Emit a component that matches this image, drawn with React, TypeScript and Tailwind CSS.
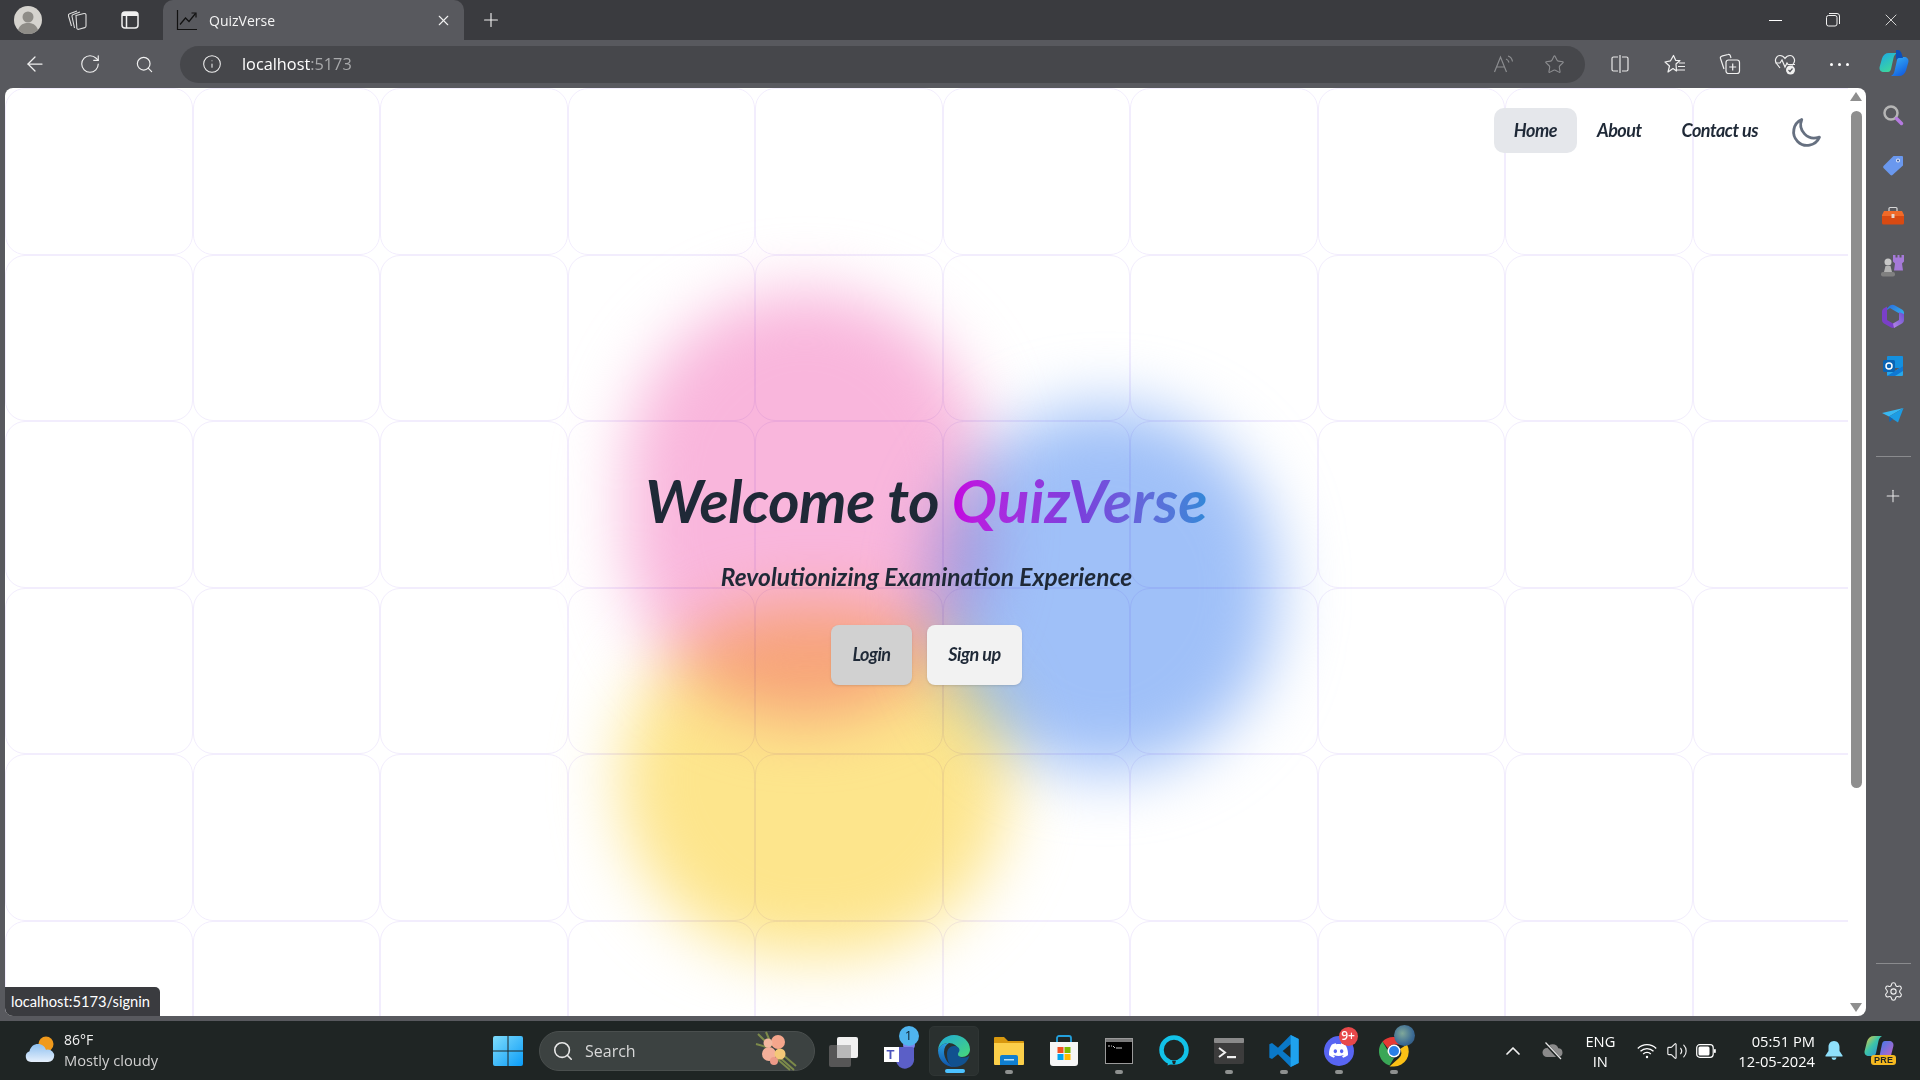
import { ArrowLeft, ChevronUp, Info, Plus, RotateCw, Search, Settings, Star, Volume2, X } from "lucide-react";
import { SiDiscord } from "react-icons/si";

const cells = Array.from({ length: 60 });

function Profile() {
  return (
    <svg width="28" height="28" viewBox="0 0 28 28">
      <circle cx="14" cy="14" r="14" fill="#d5d3ce" />
      <circle cx="14" cy="11" r="5.5" fill="#8e8c87" />
      <path d="M4 24c2-6 6-7 10-7s8 1 10 7a14 14 0 0 1-20 0z" fill="#8e8c87" />
    </svg>
  );
}

function Workspaces() {
  return (
    <svg width="24" height="24" viewBox="0 0 24 24" fill="none" stroke="#dcdcdc" strokeWidth="1.1">
      <path d="M11 7.500 19 5.500c1-.2 2 .4 2 1.500v11c0 .8-.5 1.400-1.200 1.600l-6 1.700c-1 .3-2-.4-2-1.500z" />
      <path d="M9.500 20 7 8.500C6.800 7.500 7.300 6.700 8.200 6.400L15 4" />
      <path d="M6.500 18 3.500 8c-.3-1 .2-1.900 1.100-2.200L12 3" />
    </svg>
  );
}

function TabsIcon() {
  return (
    <svg width="20" height="20" viewBox="0 0 20 20" fill="none">
      <rect x="2" y="2" width="16" height="16" rx="3" stroke="#f0f0f0" strokeWidth="1.500" />
      <path d="M2 5a3 3 0 0 1 3-3h10a3 3 0 0 1 3 3v1H2z" fill="#f0f0f0" />
      <path d="M6.500 6v12" stroke="#f0f0f0" strokeWidth="1.500" />
    </svg>
  );
}

function Favicon() {
  return (
    <svg width="22" height="22" viewBox="0 0 22 22" fill="none" stroke="#111" strokeWidth="1.200">
      <path d="M1.500 1v19.500H21" />
      <path d="M4 15.500 9.500 9l3.500 3.500 6.500-8" />
      <path d="M15.500 4H20v4.500" />
    </svg>
  );
}

function SplitIcon() {
  return (
    <svg width="20" height="20" viewBox="0 0 20 20" fill="none" stroke="#e8e8e8" strokeWidth="1.200">
      <path d="M8 3H3.500A1.500 1.500 0 0 0 2 4.500v11A1.500 1.500 0 0 0 3.500 17H8" />
      <path d="M12 3h4.500A1.500 1.500 0 0 1 18 4.500v11a1.500 1.500 0 0 1-1.500 1.500H12" />
      <path d="M10 1v18" />
    </svg>
  );
}

function FavoritesIcon() {
  return (
    <svg width="22" height="20" viewBox="0 0 22 20" fill="none" stroke="#f0f0f0" strokeWidth="1.200">
      <path d="M9.500 1.500 11.800 6.500 H16L12 10l.5 7-3.500-2.500L4 18l1.500-6L1 8l5.500-1.200z" strokeLinejoin="round" />
      <path d="M15 9h6M14 12.500h7M13 16h8" />
    </svg>
  );
}

function CollectionsIcon() {
  return (
    <svg width="22" height="22" viewBox="0 0 22 22" fill="none" stroke="#f0f0f0" strokeWidth="1.200">
      <path d="M5 16 1.500 5.500c-.3-1 .2-2 1.200-2.300L9 1.500c1-.3 2 .2 2.300 1.200L12 5" />
      <rect x="7" y="7" width="13.500" height="13.500" rx="2.500" />
      <path d="M13.700 10.500v7M10.200 14h7" />
    </svg>
  );
}

function HealthIcon() {
  return (
    <svg width="22" height="22" viewBox="0 0 22 22" fill="none">
      <path d="M6 15 2.500 10.500C0 7 2.500 2.500 6 2.500c2.200 0 3.800 1.200 5 3 1.200-1.800 2.800-3 5-3 3.500 0 6 4.500 3.500 8l-1.500 2" stroke="#f0f0f0" strokeWidth="1.200" />
      <path d="M1.500 10H6l2-3 3 7 2-4 1 1.500h7" stroke="#f0f0f0" strokeWidth="1.200" />
      <circle cx="16.500" cy="17" r="4.500" fill="#f0f0f0" />
      <path d="m14.500 17 1.500 1.500 2.500-3" stroke="#55565b" strokeWidth="1.200" fill="none" />
    </svg>
  );
}

function ReadAloud() {
  return (
    <svg width="22" height="20" viewBox="0 0 22 20" fill="none" stroke="#8c8d90" strokeWidth="1.200">
      <path d="M1.500 18 7.500 3l6 15M3.500 13h8" />
      <path d="M13 5c1.500.5 2.500 1.700 3 3.500M15 2c2.500.7 4 2.700 4.500 5.500" />
    </svg>
  );
}

function CopilotMark({ size }: { size: number }) {
  return (
    <svg width={size} height={size} viewBox="0 0 30 30">
      <defs>
        <linearGradient id="cpa" x1="0" y1="0" x2="0.6" y2="1">
          <stop offset="0" stopColor="#1aa8e8" />
          <stop offset="1" stopColor="#3fd89a" />
        </linearGradient>
        <linearGradient id="cpb" x1="0" y1="0" x2="0.6" y2="1">
          <stop offset="0" stopColor="#38b6f8" />
          <stop offset="1" stopColor="#1460e0" />
        </linearGradient>
      </defs>
      <path d="M10 4h8c-2 1-3 3-3.500 5L12 20c-.4 1.700-1.500 3-3 3H5c-3 0-5-2-4.400-5L3 9.500C4 6 6.500 4 10 4z" fill="url(#cpa)" />
      <path d="M20 27h-8c2-1 3-3 3.500-5L18 11c.4-1.700 1.500-3 3-3h4c3 0 5 2 4.400 5L27 21.500C26 25 23.500 27 20 27z" fill="url(#cpb)" />
      <path d="M17 1h1.500c2.500 0 4 2 4.500 5l1 3h-4c-1.500 0-2.500 1-3 2.500z" fill="#0d4fb8" />
    </svg>
  );
}

function SideSearch() {
  return (
    <svg width="22" height="22" viewBox="0 0 22 22" fill="none">
      <circle cx="9" cy="9" r="6.500" stroke="#b5b5b5" strokeWidth="2.500" />
      <path d="m14.500 14.500 5 5" stroke="#b57ae0" strokeWidth="3.500" strokeLinecap="round" />
    </svg>
  );
}

function SideTag() {
  return (
    <svg width="22" height="22" viewBox="0 0 22 22">
      <path d="M11.500 2H20a1 1 0 0 1 1 1v8.500L10.500 21a1.500 1.500 0 0 1-2 0L1.500 14a1.500 1.500 0 0 1 0-2z" fill="#6a98ee" />
      <circle cx="16" cy="6.500" r="2" fill="#dfe8fb" />
      <circle cx="16" cy="6.500" r="1" fill="#36528f" />
    </svg>
  );
}

function SideToolbox() {
  return (
    <svg width="22" height="20" viewBox="0 0 22 20">
      <path d="M7 6V2.500C7 2 7.500 1.500 8 1.500h6c.5 0 1 .5 1 1V6" stroke="#d8d8d8" strokeWidth="1.200" fill="none" />
      <path d="M2 5h18l2 4v1H0V9z" fill="#f06a28" />
      <path d="M0 10h22v7a1.500 1.500 0 0 1-1.500 1.500h-19A1.500 1.500 0 0 1 0 17z" fill="#d84a12" />
      <rect x="9.500" y="8" width="3" height="4" rx=".6" fill="#e6d6cc" />
    </svg>
  );
}

function SideChess() {
  return (
    <svg width="24" height="24" viewBox="0 0 24 24">
      <path d="M13 1h2.500v2.500h2V1h2v2.500h2V1H24v6.500l-2 2 1 7h-9l1-7-2-2z" fill="#a57ad8" transform="translate(-1 0)" />
      <circle cx="7" cy="8" r="3.500" fill="#c8c8c8" />
      <path d="M4.500 12h5l1.500 6H3z" fill="#b4b4b4" />
      <rect x="0" y="18" width="14" height="4.500" rx="2" fill="#808080" />
    </svg>
  );
}

function SideM365() {
  return (
    <svg width="22" height="24" viewBox="0 0 22 24">
      <defs>
        <linearGradient id="m3a" x1="0" y1="0" x2="1" y2="1">
          <stop offset="0" stopColor="#2b6ce0" />
          <stop offset="1" stopColor="#33b6e8" />
        </linearGradient>
        <linearGradient id="m3b" x1="0" y1="1" x2="1" y2="0">
          <stop offset="0" stopColor="#b487e6" />
          <stop offset="1" stopColor="#6a4ed0" />
        </linearGradient>
      </defs>
      <path d="M8 1.500c1.500-1 3.500-1 5 0l7 4c1.300.8 2 2 2 3.500v3l-9-5-5-3-3 2V4.500z" fill="url(#m3a)" />
      <path d="M0 7.500C0 6 1 4.500 2.500 4L5 2.500V16l6 3.500 3 3-1.500 1c-1 .5-2.500.5-3.500 0l-7-4C.7 18.700 0 17.500 0 16z" fill="#7a3fc8" />
      <path d="M22 10v6c0 1.500-.7 2.700-2 3.500L12 24l-1-4.500 6-3.500V8z" fill="url(#m3b)" />
    </svg>
  );
}

function SideOutlook() {
  return (
    <svg width="20" height="20" viewBox="0 0 20 20">
      <rect x="4" y="0" width="16" height="12" rx="1" fill="#1490df" />
      <path d="M4 10 12 15l8-5v9a1 1 0 0 1-1 1H5a1 1 0 0 1-1-1z" fill="#28a8ea" />
      <path d="M12 15l8-5v5l-8 5H4z" fill="#0f78d4" />
      <rect x="0" y="4" width="12" height="12" rx="1.500" fill="#0a64b4" />
      <circle cx="6" cy="10" r="3" fill="none" stroke="#fff" strokeWidth="1.500" />
    </svg>
  );
}

function SideSend() {
  return (
    <svg width="22" height="16" viewBox="0 0 22 16">
      <path d="M0 5 21.500 0 7 8.500z" fill="#38b8f2" />
      <path d="M21.500 0 7 8.500 16 14.500z" fill="#1c9ce4" />
      <path d="M7 8.500 7.500 14 11 11z" fill="#0d66b8" />
    </svg>
  );
}

function Weather() {
  return (
    <svg width="32" height="30" viewBox="0 0 32 30">
      <defs>
        <linearGradient id="wc" x1="0" y1="0" x2="0" y2="1">
          <stop offset="0" stopColor="#8ec0f0" />
          <stop offset="1" stopColor="#e6f0fc" />
        </linearGradient>
      </defs>
      <circle cx="22" cy="9" r="7.500" fill="#f09a1c" />
      <path d="M7 27a5.500 5.500 0 0 1-1.500-10.700C6.500 11.500 10 9 14 9c4 0 7 2.500 8 6 .7-.3 1.300-.4 2-.4a6.200 6.200 0 0 1 0 12.400z" fill="url(#wc)" />
    </svg>
  );
}

function WindowsLogo() {
  return (
    <svg width="30" height="30" viewBox="0 0 30 30">
      <defs>
        <linearGradient id="wl" x1="0" y1="0" x2="1" y2="1">
          <stop offset="0" stopColor="#7fdcfb" />
          <stop offset="1" stopColor="#0a9cf8" />
        </linearGradient>
      </defs>
      <path d="M0 2a2 2 0 0 1 2-2h12.500v14.500H0zM15.500 0H28a2 2 0 0 1 2 2v12.500H15.500zM0 15.500h14.500V30H2a2 2 0 0 1-2-2zM15.500 15.500H30V28a2 2 0 0 1-2 2H15.500z" fill="url(#wl)" />
    </svg>
  );
}

function Bouquet() {
  return (
    <svg width="44" height="42" viewBox="0 0 44 42">
      <path d="M4 4l12 12M2 14l14 4M12 2l6 14M24 26l16 14M22 28l14 12M28 24l14 12" stroke="#7c8a4a" strokeWidth="2" />
      <circle cx="15" cy="24" r="7" fill="#f4b09a" />
      <circle cx="24" cy="12" r="7" fill="#f5a68c" />
      <circle cx="26" cy="24" r="5.500" fill="#f4c878" />
      <circle cx="14" cy="13" r="4.500" fill="#f2b8a0" />
      <circle cx="20" cy="31" r="4" fill="#ec9a88" />
    </svg>
  );
}

function TaskView() {
  return (
    <svg width="32" height="32" viewBox="0 0 32 32">
      <rect x="9" y="2" width="21" height="21" rx="2" fill="#f0f0f0" />
      <rect x="1" y="10" width="22" height="22" rx="2" fill="#5c5c5c" fillOpacity=".9" />
      <rect x="9" y="10" width="14" height="13" fill="#b8b8b8" />
    </svg>
  );
}

function Teams() {
  return (
    <div className="relative ml-[6px] h-[36px] w-[36px]">
      <svg width="36" height="36" viewBox="0 0 36 36">
        <circle cx="25" cy="12" r="6" fill="#7b83eb" />
        <path d="M10 14h18a2 2 0 0 1 2 2v9a9 9 0 0 1-18 3z" fill="#5b5fc7" />
        <rect x="0" y="14" width="15" height="15" fill="#fff" />
      </svg>
      <span className="absolute left-[3px] top-[14px] text-[13px] leading-[15px] font-bold text-[#4b53bc] font-['Liberation_Sans',sans-serif]">T</span>
      <span className="absolute left-[15px] top-[-7px] flex h-[20px] w-[20px] items-center justify-center rounded-full bg-[#4fb4ee] text-[13px] text-[#10202c] font-['Open_Sans',sans-serif]">1</span>
    </div>
  );
}

function Edge() {
  return (
    <svg width="32" height="32" viewBox="0 0 32 32">
      <defs>
        <linearGradient id="ea" x1="0" y1="0" x2="1" y2="1">
          <stop offset="0" stopColor="#1fa8d8" />
          <stop offset="1" stopColor="#48d878" />
        </linearGradient>
        <linearGradient id="eb" x1="0" y1="0" x2="0" y2="1">
          <stop offset="0" stopColor="#2aa0e0" />
          <stop offset="1" stopColor="#0f52a8" />
        </linearGradient>
      </defs>
      <path d="M16 0c9 0 16 6.500 16 14.500 0 4.500-3.500 7.500-8 7.500-3 0-5.500-1-5.500-3 0-1 1.500-1.500 1.500-4C20 11 15.500 8 11 8 6 8 2 10.500 0 15 .8 6.500 7.500 0 16 0z" fill="url(#ea)" />
      <path d="M0 15C1.800 10.500 6 8 11 8c-3 1.500-5 5-5 9 0 7 5 13 10.500 15C7 32 0 25 0 15z" fill="url(#eb)" />
      <path d="M9 19c0-5 3-8 7-8s5.500 2.500 5.500 4c0 2-1.500 2.500-1.500 4 0 3 4 4 7 3.500 2-.3 3.500-1 4.500-2C30 27 24 32 16.500 32 12 32 9 26 9 19z" fill="#11518f" />
    </svg>
  );
}

function Explorer() {
  return (
    <svg width="32" height="32" viewBox="0 0 32 32">
      <path d="M1 3a1 1 0 0 1 1-1h9l4 4h15a1 1 0 0 1 1 1v4H1z" fill="#d8980e" />
      <path d="M1 8h30v21a1 1 0 0 1-1 1H2a1 1 0 0 1-1-1z" fill="#fbcf4a" />
      <path d="M7 22a2 2 0 0 1 2-2h14a2 2 0 0 1 2 2v8H7z" fill="#0f7ed0" />
      <rect x="11" y="24" width="10" height="1.500" fill="#b6dff8" />
    </svg>
  );
}

function Store() {
  return (
    <svg width="30" height="32" viewBox="0 0 30 32">
      <path d="M8 7V3a2 2 0 0 1 2-2h10a2 2 0 0 1 2 2v4" stroke="#23a0dc" strokeWidth="1.800" fill="none" />
      <path d="M1 7h28v21a3 3 0 0 1-3 3H4a3 3 0 0 1-3-3z" fill="#f6f6f6" />
      <rect x="8.500" y="12" width="6" height="6" fill="#f25022" />
      <rect x="15.500" y="12" width="6" height="6" fill="#7fba00" />
      <rect x="8.500" y="19" width="6" height="6" fill="#00a4ef" />
      <rect x="15.500" y="19" width="6" height="6" fill="#ffb900" />
    </svg>
  );
}

function Cmd() {
  return (
    <svg width="28" height="26" viewBox="0 0 28 26">
      <rect x=".5" y=".5" width="27" height="25" fill="#000" stroke="#9a9a9a" />
      <rect x="1" y="1" width="26" height="3" fill="#7a7a7a" />
      <path d="M3 8h2M6 8h1M8 8l2 2M11 10h6" stroke="#c8c8c8" strokeWidth="1" />
    </svg>
  );
}

function Alexa() {
  return (
    <svg width="30" height="32" viewBox="0 0 30 32" fill="none">
      <circle cx="15" cy="15" r="12.500" stroke="#12c2e8" strokeWidth="4.500" />
      <path d="M9.500 26 8.500 30.500 15 28z" fill="#12c2e8" />
      <path d="M13 25.800h4l-1 3.400h-2z" fill="#1f2524" />
    </svg>
  );
}

function TerminalApp() {
  return (
    <svg width="30" height="26" viewBox="0 0 30 26">
      <rect width="30" height="26" rx="2" fill="#3c3c3c" />
      <rect width="30" height="5" rx="1" fill="#8a8a8a" />
      <path d="m5 10 6 4.500-6 4.500" stroke="#f0f0f0" strokeWidth="2" fill="none" />
      <rect x="13" y="18" width="9" height="2.200" fill="#f0f0f0" />
    </svg>
  );
}

function VSCode() {
  return (
    <svg width="32" height="34" viewBox="0 0 24 25">
      <path d="M17 .500 23 3.500v18L17 24.500 7.500 15 3 18.500 1 17.500v-10L3 6.500 7.500 10zM17 7.500 11 12.500 17 17.500z" fill="#0a78c8" />
      <path d="M17 .500 23 3.500v18L17 24.500z" fill="#1fa2ee" />
    </svg>
  );
}

function Discord() {
  return (
    <div className="relative h-[36px] w-[36px]">
      <div className="absolute left-[3px] top-[3px] flex h-[30px] w-[30px] items-center justify-center rounded-full bg-[#5865f2]">
        <SiDiscord size={19} color="#fff" />
      </div>
      <span className="absolute left-[18px] top-[-6px] flex h-[19px] w-[19px] items-center justify-center rounded-full bg-[#e8484a] text-[12px] font-semibold text-white font-['Open_Sans',sans-serif]">9+</span>
    </div>
  );
}

function Chrome() {
  return (
    <div className="relative h-[36px] w-[36px]">
      <svg width="36" height="36" viewBox="0 0 36 36" className="absolute left-[3px] top-0">
        <path d="M15 4a15 15 0 0 1 13 7.500H15a6.500 6.500 0 0 0-6 4L3.500 8.500A15 15 0 0 1 15 4z" fill="#e53935" />
        <path d="M3.500 8.500 9 18a6.500 6.500 0 0 0 6 7l-4.500 7.500A15 15 0 0 1 3.500 8.500z" fill="#3aa757" />
        <path d="M28 11.500A15 15 0 0 1 15 33.500h-4.500L20 25a6.500 6.500 0 0 0 1-9z" fill="#fbc116" />
        <circle cx="15" cy="18" r="6.500" fill="#fff" />
        <circle cx="15" cy="18" r="5" fill="#2a7fe8" />
      </svg>
      <div className="absolute left-[18px] top-[-8px] h-[21px] w-[21px] rounded-full bg-[radial-gradient(circle_at_40%_40%,#7fa89a,#3b6a94_60%,#25496e)]" />
    </div>
  );
}

function Wifi() {
  return (
    <svg width="20" height="16" viewBox="0 0 20 16" fill="none" stroke="#fff" strokeWidth="1.300">
      <path d="M.8 5.500a13 13 0 0 1 18.400 0M3.500 8.300a9.200 9.200 0 0 1 13 0M6.200 11a5.300 5.300 0 0 1 7.600 0" />
      <circle cx="10" cy="14" r="1.200" fill="#fff" stroke="none" />
    </svg>
  );
}

function Battery() {
  return (
    <svg width="20" height="14" viewBox="0 0 20 14" fill="none">
      <rect x=".7" y=".7" width="16.500" height="12.600" rx="3" stroke="#fff" strokeWidth="1.200" />
      <rect x="2.500" y="2.500" width="11" height="9" rx="1.500" fill="#fff" />
      <rect x="18" y="5" width="1.800" height="4" rx=".8" fill="#fff" />
    </svg>
  );
}

function CloudOff() {
  return (
    <svg width="22" height="18" viewBox="0 0 22 18">
      <path d="M5 15a4.500 4.500 0 0 1 0-9 6 6 0 0 1 11.300.3A4.400 4.400 0 0 1 17 15z" fill="#8a8a8a" />
      <path d="M3 1l15 16" stroke="#1f2524" strokeWidth="3" />
      <path d="M3.500 0.500 19 17" stroke="#e8e8e8" strokeWidth="1.200" />
    </svg>
  );
}

function Bell() {
  return (
    <svg width="18" height="20" viewBox="0 0 18 20">
      <path d="M9 0c3.500 0 5.500 2.800 5.500 6v4l3 4.500c.3.500 0 1-.5 1H1c-.5 0-.8-.5-.5-1L3.500 10V6C3.500 2.800 5.500 0 9 0z" fill="#8fe0fb" />
      <path d="M6.500 16.500h5a2.500 2.500 0 0 1-5 0z" fill="#8fe0fb" />
    </svg>
  );
}

function CopilotPre() {
  return (
    <div className="relative h-[32px] w-[30px]">
      <svg width="30" height="28" viewBox="0 0 30 28">
        <defs>
          <linearGradient id="cpp" x1="0" y1="0" x2="1" y2="1">
            <stop offset="0" stopColor="#f4c838" />
            <stop offset="0.45" stopColor="#3cc4a8" />
            <stop offset="1" stopColor="#2a80e0" />
          </linearGradient>
          <linearGradient id="cpq" x1="0" y1="0" x2="1" y2="1">
            <stop offset="0" stopColor="#2c7cf0" />
            <stop offset="1" stopColor="#d860c0" />
          </linearGradient>
        </defs>
        <path d="M10 1h8c-2 1-3 3-3.500 5L12 18c-.4 1.700-1.500 3-3 3H5c-3 0-5-2-4.400-5L3 6.500C4 3 6.500 1 10 1z" fill="url(#cpp)" />
        <path d="M20 26h-8c2-1 3-3 3.500-5L18 9c.4-1.700 1.500-3 3-3h4c3 0 5 2 4.400 5L27 20.500C26 24 23.500 26 20 26z" fill="url(#cpq)" />
      </svg>
      <span className="absolute left-[7px] top-[20px] rounded-[3px] bg-[#f4b820] px-[3px] text-[9px] leading-[10px] font-bold tracking-wide text-[#1f2524] font-['Liberation_Sans',sans-serif]">PRE</span>
    </div>
  );
}

function Indicator({ active }: { active?: boolean }) {
  if (active) return <span className="absolute bottom-[2px] left-[15px] h-[4px] w-[20px] rounded-full bg-[#4cc2ff]" />;
  return <span className="absolute bottom-[2px] left-[24px] h-[4px] w-[8px] rounded-full bg-[#8e9190]" />;
}

const taskIcons = [
  { icon: <TaskView />, dot: false },
  { icon: <Teams />, dot: false },
  { icon: <Edge />, dot: false, active: true },
  { icon: <Explorer />, dot: true },
  { icon: <Store />, dot: false },
  { icon: <Cmd />, dot: true },
  { icon: <Alexa />, dot: false },
  { icon: <TerminalApp />, dot: true },
  { icon: <VSCode />, dot: true },
  { icon: <Discord />, dot: true },
  { icon: <Chrome />, dot: true },
];

export default function App() {
  return (
    <div className="flex h-[1080px] w-[1920px] flex-col overflow-hidden bg-[#58595e] font-['Open_Sans',sans-serif]">
      {/* tab strip */}
      <div className="flex h-[40px] shrink-0 items-center bg-[#3a3b3f]">
        <div className="flex w-[56px] justify-center"><Profile /></div>
        <div className="flex w-[42px] justify-center"><Workspaces /></div>
        <div className="flex w-[64px] justify-center"><TabsIcon /></div>
        <div className="ml-[1px] flex h-[40px] w-[301px] items-center rounded-t-[10px] bg-[#58595e] pl-[13px] pr-[12px]">
          <Favicon />
          <span className="ml-[11px] flex-1 text-[14px] text-[#f4f4f4]">QuizVerse</span>
          <X size={17} color="#f0f0f0" strokeWidth={1.5} />
        </div>
        <div className="ml-[16px]"><Plus size={22} color="#f0f0f0" strokeWidth={1.25} /></div>
        <div className="ml-auto flex items-center">
          <div className="flex w-[57px] justify-center"><div className="h-[1px] w-[13px] bg-white" /></div>
          <div className="flex w-[58px] justify-center">
            <svg width="14" height="14" viewBox="0 0 14 14" fill="none" stroke="#f0f0f0" strokeWidth="1">
              <rect x=".5" y="2.500" width="10.500" height="10.500" rx="2" />
              <path d="M3 .5h8a2.500 2.500 0 0 1 2.500 2.500v8" />
            </svg>
          </div>
          <div className="flex w-[58px] justify-center"><X size={20} color="#f0f0f0" strokeWidth={1} /></div>
        </div>
      </div>

      {/* toolbar */}
      <div className="flex h-[48px] shrink-0 items-center">
        <div className="flex w-[62px] shrink-0 justify-center pl-[8px]"><ArrowLeft size={24} color="#f0f0f0" strokeWidth={1.25} /></div>
        <div className="flex w-[55px] shrink-0 justify-center"><RotateCw size={22} color="#f0f0f0" strokeWidth={1.25} /></div>
        <div className="flex w-[55px] shrink-0 justify-center"><Search size={19} color="#f0f0f0" strokeWidth={1.5} /></div>
        <div className="ml-[8px] flex h-[37px] w-[1405px] shrink-0 items-center rounded-full bg-[#46474b] pl-[22px] pr-[20px]">
          <Info size={20} color="#f0f0f0" strokeWidth={1.25} />
          <span className="ml-[20px] flex-1 text-[16.3px] text-white">localhost<span className="text-[#a8a9ab]">:5173</span></span>
          <ReadAloud />
          <Star size={21} color="#8c8d90" strokeWidth={1.25} className="ml-[29px]" />
        </div>
        <div className="ml-[7px] flex items-center">
          <div className="flex w-[55px] justify-center"><SplitIcon /></div>
          <div className="flex w-[55px] justify-center"><FavoritesIcon /></div>
          <div className="flex w-[55px] justify-center"><CollectionsIcon /></div>
          <div className="flex w-[55px] justify-center"><HealthIcon /></div>
          <div className="flex w-[55px] justify-center gap-[5px]">
            <span className="h-[3px] w-[3px] rounded-full bg-white" />
            <span className="h-[3px] w-[3px] rounded-full bg-white" />
            <span className="h-[3px] w-[3px] rounded-full bg-white" />
          </div>
          <div className="flex w-[53px] justify-center"><CopilotMark size={30} /></div>
        </div>
      </div>

      {/* page + sidebar */}
      <div className="flex h-[928px] shrink-0 pl-[5px]">
        <div className="flex w-[1861px] overflow-hidden rounded-[8px] bg-white">
          <main className="relative flex-1 overflow-hidden font-['Lato',sans-serif]">
            <div className="absolute inset-0 grid grid-cols-[repeat(10,187.5px)] auto-rows-[166.6px]">
              {cells.map((_, i) => (
                <div key={i} className="rounded-[20px] border border-[#f2edfd]" />
              ))}
            </div>
            <div className="absolute left-[621px] top-[203px] h-[428px] w-[358px] rounded-full bg-[#f9b6dc] mix-blend-multiply blur-[32px]" />
            <div className="absolute left-[615px] top-[517px] h-[351px] w-[389px] rounded-full bg-[#fde58c] mix-blend-multiply blur-[32px]" />
            <div className="absolute left-[930px] top-[318px] h-[366px] w-[341px] rounded-full bg-[#9fc0f8] mix-blend-multiply blur-[32px]" />

            <nav className="relative flex items-center justify-end pr-[25px] pt-[20px] text-[18px] font-bold italic tracking-[-0.5px] text-[#1f2937]">
              <a className="flex h-[45px] items-center rounded-[10px] bg-[#e5e7eb] px-[20px]">Home</a>
              <a className="flex h-[45px] items-center px-[20px]">About</a>
              <a className="flex h-[45px] items-center px-[20px]">Contact us</a>
              <svg width="34" height="34" viewBox="0 0 24 24" fill="none" stroke="#667080" strokeWidth="2" className="ml-[11px] mt-[4px]">
                <path d="M21 15A9.500 9.500 0 0 1 9 2.500 9.500 9.500 0 1 0 21.500 15z" strokeLinejoin="round" />
              </svg>
            </nav>

            <section className="relative flex flex-col items-center pt-[317px] text-[#1f2937]">
              <h1 className="text-[60px] leading-[60px] font-bold italic tracking-[-0.5px]">
                Welcome to{" "}
                <span className="bg-gradient-to-r from-[#c400e0] via-[#7a3fdc] to-[#2f88d8] bg-clip-text tracking-[0.2px] text-transparent">QuizVerse</span>
              </h1>
              <p className="mt-[31px] text-[24.5px] leading-[32px] font-bold italic">Revolutionizing Examination Experience</p>
              <div className="mt-[32px] flex gap-[15px] text-[18px] font-bold italic tracking-[-0.5px]">
                <button className="h-[60px] w-[81px] rounded-[8px] bg-[#d1d1d1] pb-[1px] shadow-sm">Login</button>
                <button className="h-[60px] w-[95px] rounded-[8px] bg-[#f2f2f2] pb-[1px] shadow-sm">Sign up</button>
              </div>
            </section>

            <div className="absolute bottom-0 left-0 flex h-[29px] w-[155px] items-center rounded-tr-[5px] bg-[#3a3b3f] pl-[6px] text-[14.7px] text-white">
              localhost:5173/signin
            </div>
          </main>

          {/* scrollbar */}
          <div className="flex w-[18px] flex-col items-center pr-[2px]">
            <div className="mt-[4px] h-0 w-0 border-x-[6px] border-b-[9px] border-x-transparent border-b-[#8e8e8e]" />
            <div className="mt-[10px] h-[677px] w-[11px] rounded-full bg-[#8e8e8e]" />
            <div className="mb-[4px] mt-auto h-0 w-0 border-x-[6px] border-t-[9px] border-x-transparent border-t-[#8e8e8e]" />
          </div>
        </div>

        {/* edge sidebar */}
        <div className="flex w-[54px] flex-col items-center pt-[1px]">
          <div className="flex h-[51px] items-center"><SideSearch /></div>
          <div className="flex h-[50px] items-center"><SideTag /></div>
          <div className="flex h-[51px] items-center"><SideToolbox /></div>
          <div className="flex h-[50px] items-center"><SideChess /></div>
          <div className="flex h-[50px] items-center"><SideM365 /></div>
          <div className="flex h-[50px] items-center"><SideOutlook /></div>
          <div className="flex h-[50px] items-center"><SideSend /></div>
          <div className="mt-[15px] h-[1px] w-[35px] bg-[#8a8b8e]" />
          <div className="mt-[29px]"><Plus size={20} color="#e8e8e8" strokeWidth={1.25} /></div>
          <div className="mt-auto h-[1px] w-[35px] bg-[#8a8b8e]" />
          <div className="mb-[14px] mt-[17px]"><Settings size={21} color="#f0f0f0" strokeWidth={1.25} /></div>
        </div>
      </div>

      <div className="h-[5px] shrink-0 bg-[#58595e]" />

      {/* taskbar */}
      <div className="relative flex h-[59px] shrink-0 items-center bg-[#1f2524] text-white">
        <div className="flex w-[493px] items-center pb-[2px] pl-[24px]">
          <Weather />
          <div className="ml-[8px] flex flex-col text-[14.7px] leading-[20px]">
            <span className="text-[14px] text-[#f2f2f2]">86°F</span>
            <span className="text-[#d0d0d0]">Mostly cloudy</span>
          </div>
        </div>
        <WindowsLogo />
        <div className="ml-[16px] flex h-[40px] w-[276px] items-center rounded-full border border-[#4a4f4e] bg-[#3c4241] pl-[12px] pr-[16px]">
          <Search size={22} color="#e8e8e8" strokeWidth={1.75} />
          <span className="ml-[11px] flex-1 text-[16px] text-[#d8d8d8]">Search</span>
          <Bouquet />
        </div>
        <div className="ml-[1px] flex">
          {taskIcons.map((t, i) => (
            <div
              key={i}
              className={t.active ? "relative flex h-[50px] w-[50px] mx-[2.5px] items-center justify-center rounded-[5px] border border-[#2f3534] bg-[#2a302f]" : "relative flex h-[50px] w-[55px] items-center justify-center"}
            >
              {t.icon}
              {t.active && <Indicator active />}
              {t.dot && <Indicator />}
            </div>
          ))}
        </div>
        <div className="ml-auto flex items-center pr-[26px]">
          <ChevronUp size={24} color="#f0f0f0" strokeWidth={1.75} />
          <div className="ml-[17px]"><CloudOff /></div>
          <div className="ml-[18.5px] flex w-[36px] flex-col items-center text-[14.7px] leading-[20px] text-white"><span>ENG</span><span>IN</span></div>
          <div className="ml-[19px]"><Wifi /></div>
          <div className="ml-[9px]"><Volume2 size={22} color="#f0f0f0" strokeWidth={1.25} /></div>
          <div className="ml-[8px]"><Battery /></div>
          <div className="ml-[22px] flex flex-col items-end text-[14.7px] leading-[20px]"><span>05:51 PM</span><span>12-05-2024</span></div>
          <div className="ml-[10px]"><Bell /></div>
          <div className="ml-[21px]"><CopilotPre /></div>
        </div>
      </div>
    </div>
  );
}
